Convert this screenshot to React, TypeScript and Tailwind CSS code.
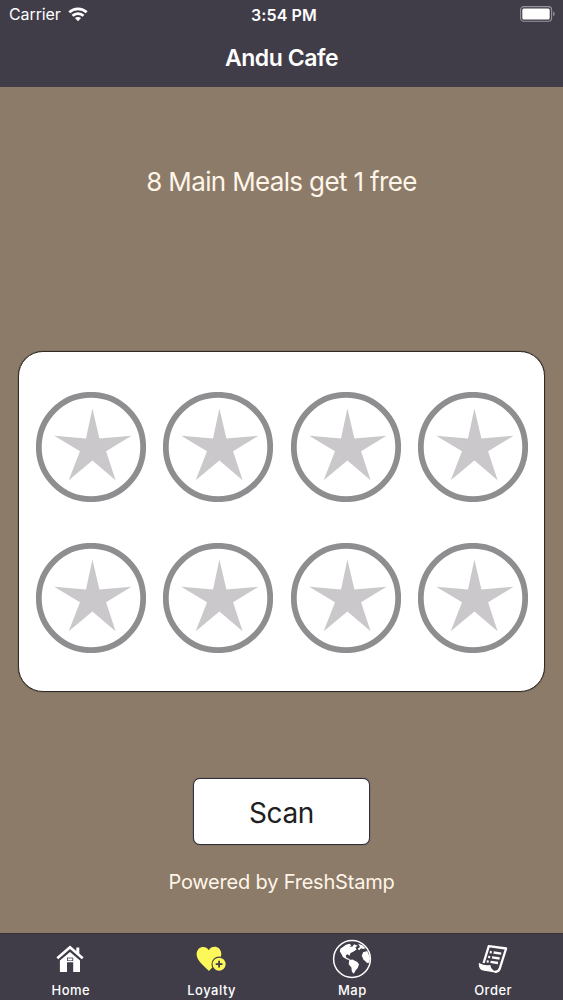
import type { ReactNode } from "react";

const stamps = [1, 2, 3, 4, 5, 6, 7, 8];

const WifiIcon = () => (
  <svg viewBox="0 0 20 15" className="w-5 h-[15px]" fill="none" stroke="#fff" strokeWidth="2.7">
    <path d="M1.3 5.3C6.2.7 13.8.7 18.7 5.3" />
    <path d="M4.5 8.8C7.6 5.9 12.4 5.9 15.5 8.8" />
    <path d="M10 14.2L6.9 11.1C8.6 9.5 11.4 9.5 13.1 11.1Z" fill="#fff" stroke="none" />
  </svg>
);

const BatteryIcon = () => (
  <svg viewBox="0 0 36 16" className="w-9 h-4">
    <rect x=".6" y=".6" width="31" height="14.6" rx="3.2" fill="none" stroke="#96949d" strokeWidth="1.1" />
    <rect x="2.3" y="2.4" width="27.4" height="11" rx="1.5" fill="#fff" />
    <path d="M33.2 5.6C35.2 6.2 35.2 9.6 33.2 10.2Z" fill="#96949d" />
  </svg>
);

const Stamp = () => (
  <svg viewBox="0 0 110 110" className="w-[110px] h-[110px]">
    <circle cx="55" cy="55" r="52.2" fill="none" stroke="#8e8d8f" strokeWidth="5.8" />
    <path
      d="M56.4 16.5L63.4 46.5L95.5 43.8L70.1 59.3L79.6 88.3L56.4 68.4L32.7 88.3L44 59.3L18.2 43.8L50 46.5Z"
      fill="#cbc8cc"
    />
  </svg>
);

const HomeIcon = () => (
  <svg viewBox="0 0 28 28" className="w-7 h-7">
    <path d="M3.9 15.5L14 7.1L24 15.5V27H17.2V17.3H11V27H3.9Z" fill="#fff" />
    <path d="M11 12.6H17.2V16H11Z" fill="#403d49" />
    <path d="M11.8 13.4H16.4V15.4H11.8Z" fill="#fff" />
    <path d="M1.3 14.2L14 3L27 14.2" fill="none" stroke="#403d49" strokeWidth="4" />
    <path d="M20.3 2.4H23.3V10L20.3 7.3Z" fill="#fff" />
    <path d="M1.3 13.2L14 2.3L26.7 13.2" fill="none" stroke="#fff" strokeWidth="2.7" />
  </svg>
);

const LoyaltyIcon = () => (
  <svg viewBox="0 0 32 28" className="w-8 h-7">
    <path
      d="M14 26C10.5 21.8 1.6 16.3 1.6 9.2C1.6 1.4 10.6-.5 13.8 5.2C17.2-.5 26.3 1.3 26.3 9.2C26.3 15.8 17.5 21.5 14 26Z"
      fill="#fdf85a"
    />
    <circle cx="24.1" cy="19.2" r="7.6" fill="#403d49" />
    <circle cx="24.1" cy="19.2" r="6.5" fill="#fdf85a" />
    <path d="M24.1 15.8V22.6M20.7 19.2H27.5" stroke="#403d49" strokeWidth="1.8" />
  </svg>
);

const MapIcon = () => (
  <svg viewBox="0 0 40 40" className="w-10 h-10" fill="#fff">
    <circle cx="20" cy="20" r="18.4" fill="none" stroke="#fff" strokeWidth="1.5" />
    <path d="M8.3 9.7L14 5.8L17.5 4.8L19.3 6.2L17.5 7.8L20.5 7.4L22 5.3L25.8 6.8L23.4 8.3L24.6 10.4L21.2 12.7L18.6 14.1L17.4 16.8L15.7 15.3L13.7 16.2L14.4 18.7L17.5 20L18.1 21.2L14.6 20.3L10.9 18L9.3 14.8L7.8 12.5Z" />
    <path d="M17.2 21.1L20.4 20.4L25.3 23.1L27 25.3L25.7 29L23.7 31.3L21.8 34.7L19.9 32.8L19.4 28.5L16.7 25.2Z" />
    <path d="M26.2 4.7L30.3 6.3L33.5 9.3L31.2 10.1L29.3 9.3L27.1 11.2L25.7 9.7L28 8.1Z" />
    <path d="M31.1 13.2L35.2 12.1L38 18.5L37.3 23.8L35.1 23.9L31.4 20.5L29.8 16.7Z" />
  </svg>
);

const OrderIcon = () => (
  <svg viewBox="0 0 30 30" className="w-[30px] h-[30px]" fill="none" stroke="#fff">
    <path d="M5.6 19L10.8 2.1L28.1 4.5L21.9 24.2Q20.4 28.5 16.8 27.6" strokeWidth="2.3" strokeLinejoin="round" />
    <path d="M1.4 19.8Q6 22.6 11.9 21.7Q12.2 25.4 17 27.8L5.1 26Q1.2 24.9 1.4 19.8Z" fill="#fff" strokeWidth="1.2" />
    <path d="M15.6 8.5L23.2 9.7M14 13.3L21.6 14.5M12.5 17.8L20 19" strokeWidth="2.3" />
    <path d="M11.8 8L13.8 8.3M10.2 12.8L12.2 13.1M8.7 17.3L10.7 17.6" strokeWidth="2.3" />
  </svg>
);

const tabs: { title: string; icon: ReactNode }[] = [
  { title: "Home", icon: <HomeIcon /> },
  { title: "Loyalty", icon: <LoyaltyIcon /> },
  { title: "Map", icon: <MapIcon /> },
  { title: "Order", icon: <OrderIcon /> },
];

export default function App() {
  return (
    <div className="flex flex-col w-full h-screen overflow-hidden bg-[#8c7b69] font-['Inter',sans-serif] text-white">
      <header className="h-[87px] shrink-0 bg-[#403d49]">
        <div className="grid grid-cols-3 items-center h-7 pl-[9px] pr-[7px]">
          <div className="flex items-center gap-[7px] text-base">
            <span className="tracking-[-0.1px]">Carrier</span>
            <WifiIcon />
          </div>
          <div className="pl-[3px] pt-px text-center text-base font-semibold tracking-[0.1px]">3:54 PM</div>
          <div className="flex justify-end">
            <BatteryIcon />
          </div>
        </div>
        <h1 className="pt-px text-center text-[23px] leading-[59px] font-semibold tracking-[-0.45px]">Andu Cafe</h1>
      </header>

      <main className="flex flex-col flex-1 items-center">
        <p className="mt-[75px] text-[26px] leading-10 tracking-[-0.65px] text-[#fff5e8]">
          8 Main Meals get 1 free
        </p>

        <section className="mt-[149px] w-[527px] h-[341px] shrink-0 rounded-[25px] border border-[#302a25] shadow-[0_0_1px_#302a25] bg-white pt-[39.5px] pl-[17.2px]">
          <div className="grid grid-cols-[repeat(4,110px)] gap-x-[17.3px] gap-y-[41px]">
            {stamps.map((id) => (
              <Stamp key={id} />
            ))}
          </div>
        </section>

        <button className="mt-[86px] w-[177px] h-[67px] shrink-0 rounded-[7px] border border-[#302f3b] shadow-[0_0_1px_#302f3b] bg-white pt-0.5 text-[28px] tracking-[-0.4px] text-[#202022]">
          Scan
        </button>
        <p className="mt-[21px] text-xl leading-8 tracking-[-0.2px] text-[#fff5e8]">Powered by FreshStamp</p>
      </main>

      <nav className="grid grid-cols-4 h-[67px] shrink-0 border-t border-[#35323c] bg-[#403d49]">
        {tabs.map(({ title, icon }) => (
          <div key={title} className="flex flex-col items-center pt-[5px]">
            <div className="flex items-center justify-center h-10">{icon}</div>
            <span className="mt-0.5 pl-px text-[13px] leading-[18px] font-medium tracking-[0.5px]">{title}</span>
          </div>
        ))}
      </nav>
    </div>
  );
}
